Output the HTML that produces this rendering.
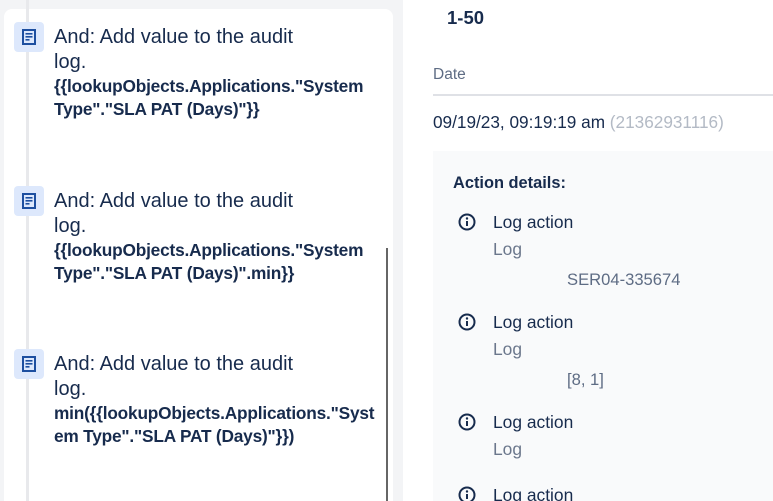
<!DOCTYPE html>
<html><head><meta charset="utf-8"><style>
*{margin:0;padding:0;box-sizing:border-box}
html,body{width:773px;height:501px;overflow:hidden}
body{background:#f3f4f6;font-family:"Liberation Sans",sans-serif;color:#172b4d;position:relative}
.card{position:absolute;left:4px;top:9px;width:389px;height:492px;background:#fff;border-radius:8px 8px 0 0}
.vline{position:absolute;left:26px;top:0;width:3px;height:501px;background:#e8e9ec}
.scroll{position:absolute;left:386px;top:248px;width:2px;height:253px;background:#666}
.item{position:absolute;left:14px}
.ic{position:absolute;left:0;top:0;width:30px;height:30px;background:#dde8fc;border-radius:4px}
.ic svg{position:absolute;left:8px;top:7px}
.t{position:absolute;left:40px;top:3px;width:330px;font-size:20px;line-height:25px;color:#172b4d}
.b{font-size:17.3px;font-weight:bold;line-height:23px;color:#172b4d;letter-spacing:-0.2px}
.right{position:absolute;left:403px;top:0;width:370px;height:501px;background:#fff}
.p{position:absolute}
.det{position:absolute;left:30px;top:151px;width:340px;height:360px;background:#f9fafb}
.la{position:absolute;left:60px;font-size:17.4px;color:#172b4d}
.lg{position:absolute;left:60px;font-size:17.4px;color:#6b778c}
.v{position:absolute;left:134px;font-size:16.6px;color:#5e6c84}
.ii{position:absolute;left:25px}
</style></head><body>
<div class="card"></div>
<div class="vline"></div>
<div class="scroll"></div>

<div class="item" style="top:22px"><div class="ic"><svg width="14" height="16" viewBox="0 0 14 16"><rect x="1" y="1" width="12" height="14" fill="none" stroke="#1d4fa0" stroke-width="2"/><rect x="3.5" y="4" width="7" height="1.6" fill="#1d4fa0"/><rect x="3.5" y="7" width="7" height="1.6" fill="#1d4fa0"/><rect x="3.5" y="10" width="4" height="1.6" fill="#1d4fa0"/></svg></div>
<div class="t">And: Add value to the audit<br>log.<div class="b">{{lookupObjects.Applications."System Type"."SLA PAT (Days)"}}</div></div></div>

<div class="item" style="top:186px"><div class="ic"><svg width="14" height="16" viewBox="0 0 14 16"><rect x="1" y="1" width="12" height="14" fill="none" stroke="#1d4fa0" stroke-width="2"/><rect x="3.5" y="4" width="7" height="1.6" fill="#1d4fa0"/><rect x="3.5" y="7" width="7" height="1.6" fill="#1d4fa0"/><rect x="3.5" y="10" width="4" height="1.6" fill="#1d4fa0"/></svg></div>
<div class="t">And: Add value to the audit<br>log.<div class="b">{{lookupObjects.Applications."System Type"."SLA PAT (Days)".min}}</div></div></div>

<div class="item" style="top:349px"><div class="ic"><svg width="14" height="16" viewBox="0 0 14 16"><rect x="1" y="1" width="12" height="14" fill="none" stroke="#1d4fa0" stroke-width="2"/><rect x="3.5" y="4" width="7" height="1.6" fill="#1d4fa0"/><rect x="3.5" y="7" width="7" height="1.6" fill="#1d4fa0"/><rect x="3.5" y="10" width="4" height="1.6" fill="#1d4fa0"/></svg></div>
<div class="t">And: Add value to the audit<br>log.<div class="b">min({{lookupObjects.Applications."Syst<br>em Type"."SLA PAT (Days)"}})</div></div></div>

<div class="right">
<div class="p" style="left:44px;top:7px;font-size:18.5px;font-weight:bold">1-50</div>
<div class="p" style="left:30px;top:66px;font-size:15.5px;color:#5e6c84">Date</div>
<div class="p" style="left:30px;top:94px;width:340px;height:2px;background:#dfe1e6"></div>
<div class="p" style="left:30px;top:112px;font-size:17.2px;white-space:nowrap">09/19/23, 09:19:19 am <span style="color:#b3bac5">(21362931116)</span></div>
<div class="det">
<div class="p" style="left:20px;top:23px;font-size:16.4px;font-weight:bold">Action details:</div>
<svg class="ii" style="top:62px" width="18" height="18" viewBox="0 0 18 18"><circle cx="9" cy="9" r="7.5" fill="none" stroke="#172b4d" stroke-width="2"/><rect x="8" y="8" width="2" height="5" fill="#172b4d"/><circle cx="9" cy="5.5" r="1.2" fill="#172b4d"/></svg>
<div class="la" style="top:61px">Log action</div><div class="lg" style="top:88px">Log</div><div class="v" style="top:119px">SER04-335674</div>
<svg class="ii" style="top:162px" width="18" height="18" viewBox="0 0 18 18"><circle cx="9" cy="9" r="7.5" fill="none" stroke="#172b4d" stroke-width="2"/><rect x="8" y="8" width="2" height="5" fill="#172b4d"/><circle cx="9" cy="5.5" r="1.2" fill="#172b4d"/></svg>
<div class="la" style="top:161px">Log action</div><div class="lg" style="top:188px">Log</div><div class="v" style="top:219px">[8, 1]</div>
<svg class="ii" style="top:262px" width="18" height="18" viewBox="0 0 18 18"><circle cx="9" cy="9" r="7.5" fill="none" stroke="#172b4d" stroke-width="2"/><rect x="8" y="8" width="2" height="5" fill="#172b4d"/><circle cx="9" cy="5.5" r="1.2" fill="#172b4d"/></svg>
<div class="la" style="top:261px">Log action</div><div class="lg" style="top:288px">Log</div>
<svg class="ii" style="top:335px" width="18" height="18" viewBox="0 0 18 18"><circle cx="9" cy="9" r="7.5" fill="none" stroke="#172b4d" stroke-width="2"/><rect x="8" y="8" width="2" height="5" fill="#172b4d"/><circle cx="9" cy="5.5" r="1.2" fill="#172b4d"/></svg>
<div class="la" style="top:334px">Log action</div>
</div>
</div>
</body></html>
